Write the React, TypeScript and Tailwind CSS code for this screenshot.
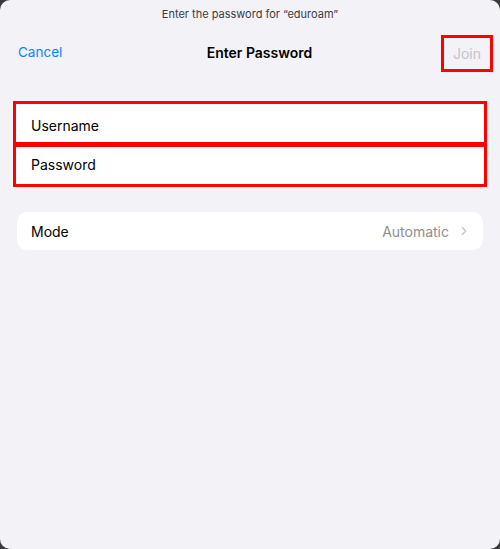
import { ChevronRight } from 'lucide-react'

export default function App() {
  return (
    <div className="w-[500px] h-[549px] bg-[#3a3a3c]" style={{ fontFamily: 'Inter, "Noto Sans", sans-serif' }}>
      <div className="w-full h-full bg-[#f2f2f7] rounded-[10px] flex flex-col">

        {/* Prompt */}
        <p className="pt-[7px] text-center text-[11px] leading-[14px] text-[#3c3c43]">
          Enter the password for “eduroam”
        </p>

        {/* Nav bar */}
        <div className="mt-[14px] h-[37px] flex items-center justify-between pl-[18px] pr-[7px]">
          <span className="text-[13.5px] text-[#0a84ff] w-[60px] pb-[2px]">Cancel</span>
          <span className="text-[14px] font-semibold text-black pb-[2px]">Enter Password</span>
          <span className="w-[52px] h-[37px] flex items-center justify-center border-[3px] border-[#ff0000] text-[14px] text-[#c4c4c7]">
            Join
          </span>
        </div>

        {/* Credentials */}
        <div className="mt-[29px] mx-[13px] flex flex-col">
          <div className="h-[44px] bg-white border-[3px] border-[#ff0000] flex items-center pl-[15px] pt-[5px]">
            <span className="text-[14px] text-black">Username</span>
          </div>
          <div className="-mt-[1px] h-[43px] bg-white border-[3px] border-[#ff0000] flex items-center pl-[15px] pb-[3px]">
            <span className="text-[14px] text-black">Password</span>
          </div>
        </div>

        {/* Mode */}
        <div className="mt-[25px] mx-[17px] h-[38px] bg-white rounded-[10px] flex items-center justify-between pl-[14px] pr-[12px]">
          <span className="text-[14px] text-black">Mode</span>
          <div className="flex items-center gap-[8px]">
            <span className="text-[14px] text-[#8e8e93]">Automatic</span>
            <ChevronRight size={14} strokeWidth={2} className="text-[#c4c4c7]" />
          </div>
        </div>
      </div>
    </div>
  )
}
